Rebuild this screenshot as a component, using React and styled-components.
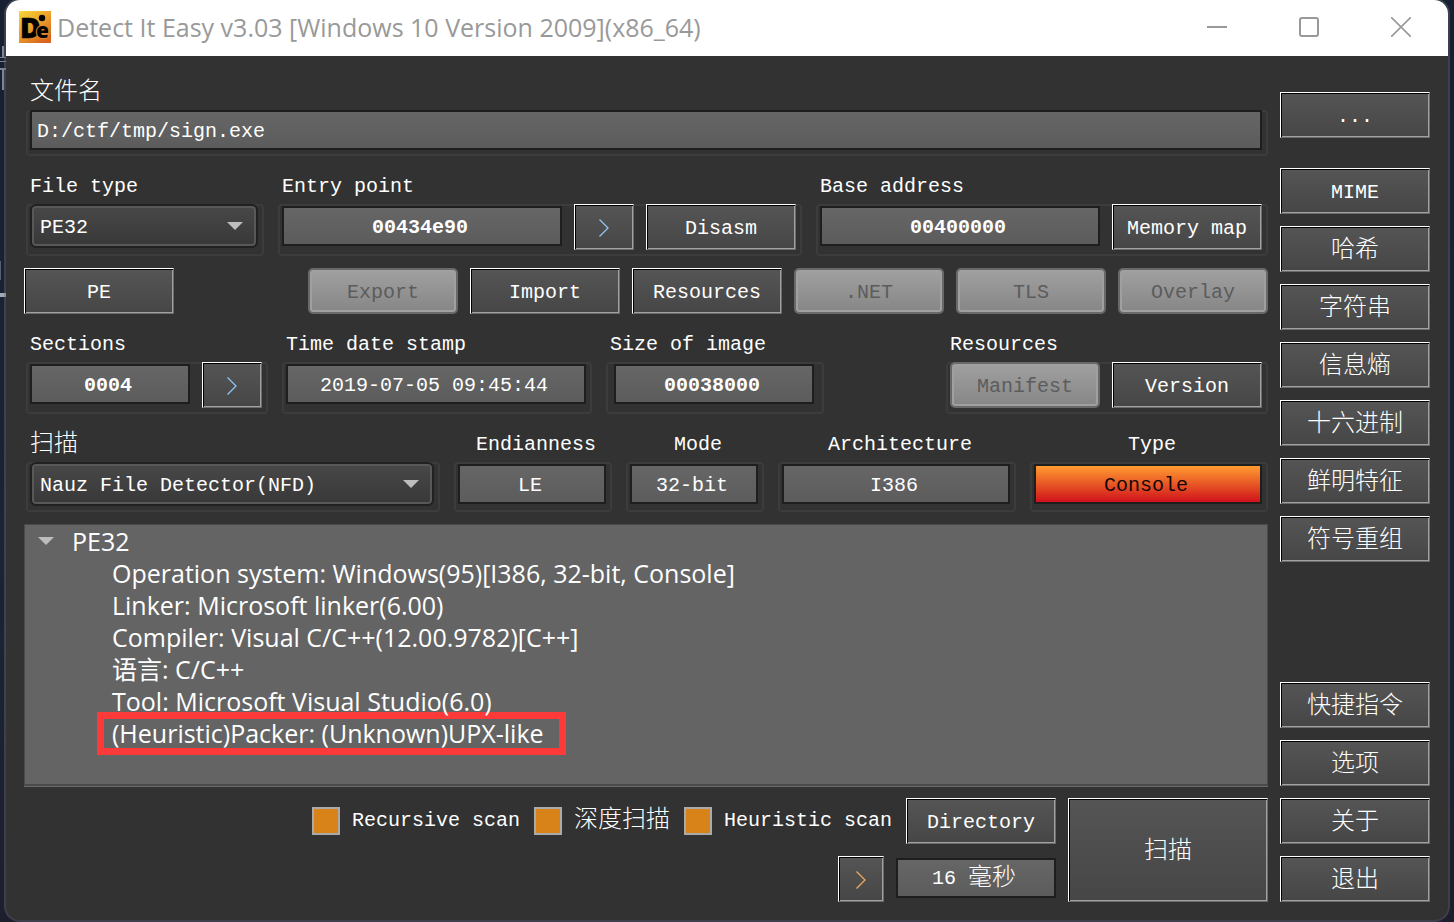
import React from 'react'
import styled, { createGlobalStyle, css } from 'styled-components'

const MONO = "'Liberation Mono', 'Noto Sans CJK SC', monospace"
const UI = "'Open Sans', 'Noto Sans CJK SC', sans-serif"

const SIDE_TOP = ['MIME', '哈希', '字符串', '信息熵', '十六进制', '鲜明特征', '符号重组']
const SIDE_BOTTOM = ['快捷指令', '选项', '关于', '退出']

const DIRECTORIES = [
  { title: 'Export', disabled: true },
  { title: 'Import' },
  { title: 'Resources' },
  { title: '.NET', disabled: true },
  { title: 'TLS', disabled: true },
  { title: 'Overlay', disabled: true },
]

const RESULTS = [
  'Operation system: Windows(95)[I386, 32-bit, Console]',
  'Linker: Microsoft linker(6.00)',
  'Compiler: Visual C/C++(12.00.9782)[C++]',
  '语言: C/C++',
  'Tool: Microsoft Visual Studio(6.0)',
  '(Heuristic)Packer: (Unknown)UPX-like',
]

export default function App() {
  return (
    <>
      <GlobalStyle />
      <Desktop>
        <Window>
          <TitleBar>
            <Logo />
            <Title>Detect It Easy v3.03 [Windows 10 Version 2009](x86_64)</Title>
            <WindowControls />
          </TitleBar>
          <Body>
            <Main>
              <Group>
                <Label htmlFor="file" $cjk>
                  文件名
                </Label>
                <Frame>
                  <Field id="file" defaultValue="D:/ctf/tmp/sign.exe" $align="left" $flush />
                </Frame>
              </Group>

              <Row>
                <Group $width={238}>
                  <Label htmlFor="filetype">File type</Label>
                  <Frame>
                    <Combo id="filetype" value="PE32" />
                  </Frame>
                </Group>
                <Group $grow={524}>
                  <Label htmlFor="entry">Entry point</Label>
                  <Frame>
                    <Field id="entry" defaultValue="00434e90" $bold />
                    <ArrowButton label="Entry point details" width={60} color="#8fc4f4" />
                    <Button>Disasm</Button>
                  </Frame>
                </Group>
                <Group $grow={452}>
                  <Label htmlFor="base">Base address</Label>
                  <Frame>
                    <Field id="base" defaultValue="00400000" $bold />
                    <Button>Memory map</Button>
                  </Frame>
                </Group>
              </Row>

              <ButtonRow>
                <Button>PE</Button>
                <Spacer />
                {DIRECTORIES.map(({ title, disabled }) => (
                  <Button key={title} disabled={disabled}>
                    {title}
                  </Button>
                ))}
              </ButtonRow>

              <Row>
                <Group $width={242}>
                  <Label htmlFor="sections">Sections</Label>
                  <Frame>
                    <Field id="sections" defaultValue="0004" $bold />
                    <ArrowButton label="Section list" width={60} color="#8fc4f4" />
                  </Frame>
                </Group>
                <Group $width={310}>
                  <Label htmlFor="stamp">Time date stamp</Label>
                  <Frame>
                    <Field id="stamp" defaultValue="2019-07-05 09:45:44" />
                  </Frame>
                </Group>
                <Group $width={218}>
                  <Label htmlFor="imagesize">Size of image</Label>
                  <Frame $padded>
                    <Field id="imagesize" defaultValue="00038000" $bold />
                  </Frame>
                </Group>
                <Spacer />
                <Group $width={322}>
                  <Label as="span">Resources</Label>
                  <Frame>
                    <Button disabled>Manifest</Button>
                    <Button>Version</Button>
                  </Frame>
                </Group>
              </Row>

              <Row>
                <Group $grow={1}>
                  <Label htmlFor="engine" $cjk>
                    扫描
                  </Label>
                  <Frame>
                    <Combo id="engine" value="Nauz File Detector(NFD)" />
                  </Frame>
                </Group>
                <Group $width={158}>
                  <Label htmlFor="endian" $center>
                    Endianness
                  </Label>
                  <Frame>
                    <Field id="endian" defaultValue="LE" />
                  </Frame>
                </Group>
                <Group $width={138}>
                  <Label htmlFor="mode" $center>
                    Mode
                  </Label>
                  <Frame>
                    <Field id="mode" defaultValue="32-bit" />
                  </Frame>
                </Group>
                <Group $width={238}>
                  <Label htmlFor="arch" $center>
                    Architecture
                  </Label>
                  <Frame>
                    <Field id="arch" defaultValue="I386" />
                  </Frame>
                </Group>
                <Group $width={238}>
                  <Label htmlFor="type" $center>
                    Type
                  </Label>
                  <Frame>
                    <Field id="type" defaultValue="Console" $hot />
                  </Frame>
                </Group>
              </Row>

              <Tree>
                <TreeRoot>
                  <Triangle />
                  PE32
                </TreeRoot>
                {RESULTS.map((text, i) => (
                  <TreeItem key={text}>
                    {i === RESULTS.length - 1 ? <Marked>{text}</Marked> : text}
                  </TreeItem>
                ))}
              </Tree>

              <Footer>
                <Options>
                  <OptionRow>
                    <Check>
                      <CheckBox defaultChecked />
                      Recursive scan
                    </Check>
                    <Check $cjk>
                      <CheckBox defaultChecked />
                      深度扫描
                    </Check>
                    <Check>
                      <CheckBox defaultChecked />
                      Heuristic scan
                    </Check>
                    <Button>Directory</Button>
                  </OptionRow>
                  <TimeRow>
                    <ArrowButton label="Scan log" width={46} color="#f0a860" />
                    <Elapsed>
                      16 <Cjk>毫秒</Cjk>
                    </Elapsed>
                  </TimeRow>
                </Options>
                <ScanButton $cjk>扫描</ScanButton>
              </Footer>
            </Main>

            <Side>
              <BrowseButton>...</BrowseButton>
              {SIDE_TOP.map((title) => (
                <Button key={title} $cjk={title !== 'MIME'}>
                  {title}
                </Button>
              ))}
              <Spacer />
              {SIDE_BOTTOM.map((title) => (
                <Button key={title} $cjk>
                  {title}
                </Button>
              ))}
            </Side>
          </Body>
        </Window>
      </Desktop>
    </>
  )
}

function Logo() {
  return (
    <LogoSvg width="32" height="32" viewBox="0 0 32 32" aria-hidden="true">
      <defs>
        <linearGradient id="logo" x1="0" y1="0" x2="0.7" y2="1">
          <stop offset="0" stopColor="#f5d936" />
          <stop offset="0.5" stopColor="#eda22b" />
          <stop offset="1" stopColor="#d9651f" />
        </linearGradient>
      </defs>
      <rect width="32" height="32" fill="url(#logo)" />
      <text
        x="1"
        y="27"
        fontFamily="Open Sans"
        fontWeight="800"
        fontSize="28"
        stroke="#000"
        strokeWidth="0.6"
      >
        D
        <tspan x="17" fontSize="21" stroke="#e08a28" strokeWidth="2" paintOrder="stroke">
          e
        </tspan>
      </text>
      <circle cx="23" cy="7" r="3.2" />
    </LogoSvg>
  )
}

function WindowControls() {
  return (
    <Controls>
      <ControlButton aria-label="Minimize">
        <svg width="20" height="20" stroke="#999" strokeWidth="2">
          <path d="M0 10h20" />
        </svg>
      </ControlButton>
      <ControlButton aria-label="Maximize">
        <svg width="20" height="20" fill="none" stroke="#999" strokeWidth="2">
          <rect x="1" y="1" width="18" height="18" rx="2" />
        </svg>
      </ControlButton>
      <ControlButton aria-label="Close">
        <svg width="20" height="20" stroke="#999" strokeWidth="1.6">
          <path d="M0 0l20 20M20 0L0 20" />
        </svg>
      </ControlButton>
    </Controls>
  )
}

function Triangle() {
  return (
    <svg width="16" height="8" viewBox="0 0 16 8" aria-hidden="true">
      <path d="M0 0h16l-8 8z" fill="#bdbdbd" />
    </svg>
  )
}

function Combo({ id, value }) {
  return (
    <ComboBox>
      <Select id={id} defaultValue={value}>
        <option>{value}</option>
      </Select>
      <ComboArrow>
        <Triangle />
      </ComboArrow>
    </ComboBox>
  )
}

function ArrowButton({ label, width, color }) {
  return (
    <Button aria-label={label} $width={width}>
      <svg width="10" height="18" fill="none" stroke={color} strokeWidth="1.3">
        <path d="M0.5 0.5L9 9L0.5 17.5" />
      </svg>
    </Button>
  )
}

const GlobalStyle = createGlobalStyle`
  * {
    box-sizing: border-box;
  }
  body {
    margin: 0;
    background: #1a2130;
  }
  button, input, select {
    font: inherit;
    color: inherit;
  }
`

const Desktop = styled.div`
  min-height: 100vh;
  padding: 0 6px 2px;
  background:
    linear-gradient(#a4a9b5, #a4a9b5) 0 293px / 6px 4px no-repeat,
    linear-gradient(#59606f, #59606f) 0 261px / 1px 19px no-repeat,
    linear-gradient(#7d8493, #7d8493) 2px 46px / 2px 12px no-repeat,
    linear-gradient(#7d8493, #7d8493) 0 57px / 6px 1px no-repeat,
    linear-gradient(#7d8493, #7d8493) 0 61px / 6px 1px no-repeat,
    linear-gradient(#7d8493, #7d8493) 0 68px / 6px 2px no-repeat,
    linear-gradient(#7d8493, #7d8493) 2px 70px / 2px 20px no-repeat,
    linear-gradient(#172033, #1a2436 60%, #1d1f2e);
`

const Window = styled.div`
  display: flex;
  flex-direction: column;
  min-height: calc(100vh - 2px);
  border-radius: 14px;
  overflow: hidden;
  background: #323232;
  box-shadow: 0 0 0 2px rgba(110, 112, 120, 0.4);
`

const TitleBar = styled.header`
  display: flex;
  align-items: center;
  gap: 6px;
  height: 56px;
  padding: 0 1px 2px 13px;
  background: #fff;
  color: #999;
`

const LogoSvg = styled.svg`
  overflow: visible;
`

const Title = styled.h1`
  flex: 1;
  margin: 0;
  font: 400 25px/32px ${UI};
`

const Controls = styled.div`
  display: flex;
`

const ControlButton = styled.button`
  display: flex;
  align-items: center;
  justify-content: center;
  width: 92px;
  height: 54px;
  padding: 0;
  border: 0;
  background: none;
`

const Body = styled.div`
  flex: 1;
  display: flex;
  gap: 12px;
  padding: 18px;
  color: #fff;
  font: 20px/24px ${MONO};
`

const Main = styled.main`
  flex: 1;
  min-width: 0;
  display: flex;
  flex-direction: column;
  gap: 12px;
`

const Side = styled.aside`
  display: flex;
  flex-direction: column;
  gap: 12px;
  padding-top: 18px;
`

const Row = styled.div`
  display: flex;
  gap: 14px;
`

const ButtonRow = styled.div`
  display: flex;
  gap: 12px;
`

const Spacer = styled.div`
  flex: 1;
`

const Group = styled.div`
  display: flex;
  flex-direction: column;
  min-width: 0;
  ${(props) => props.$width && `flex: 0 0 ${props.$width}px;`}
  ${(props) => props.$grow && `flex: ${props.$grow} 1 0;`}

  ${Row} > &:first-child, ${Main} > & {
    margin-left: 2px;
  }
`

// SimSun-like thin strokes for the larger Chinese labels
const textSize = css`
  font-size: ${(props) => (props.$cjk ? 24 : 20)}px;
  font-weight: ${(props) => (props.$cjk ? 300 : 400)};
`

const Label = styled.label`
  ${textSize}
  height: 36px;
  padding-top: 2px;
  padding-left: ${(props) => (props.$center ? 6 : 4)}px;
  line-height: 34px;
  text-align: ${(props) => (props.$center ? 'center' : 'left')};
`

const Frame = styled.div`
  flex: 1;
  display: flex;
  align-items: flex-start;
  gap: 12px;
  padding: ${(props) => (props.$padded ? '0 10px 6px 8px' : '0 6px 6px 4px')};
  border-radius: 4px;
  box-shadow: inset 0 0 0 2px #3c3c3c;
`

const fieldBox = css`
  height: 40px;
  border: 2px solid #1e1e1e;
  background: linear-gradient(#666, #5c5c5c);
`

const Field = styled.input`
  ${fieldBox}
  flex: 1;
  min-width: 0;
  margin-top: ${(props) => (props.$flush ? 0 : 2)}px;
  padding: 2px 9px 0 5px;
  border-radius: 0;
  outline: none;
  text-align: ${(props) => props.$align || 'center'};
  font-weight: ${(props) => (props.$bold ? 700 : 400)};
  ${(props) =>
    props.$hot &&
    css`
      background: linear-gradient(#ff9c30, #d0121b);
      color: #140505;
    `}
`

const Elapsed = styled.output`
  ${fieldBox}
  display: flex;
  align-items: center;
  justify-content: center;
  gap: 12px;
  width: 160px;
  margin-top: 2px;
  padding: 2px 4px 0 0;
`

const Cjk = styled.span`
  font-size: 24px;
  font-weight: 300;
`

const Button = styled.button`
  ${textSize}
  display: flex;
  align-items: center;
  justify-content: center;
  flex: none;
  width: ${(props) => props.$width || 150}px;
  height: 46px;
  padding: ${(props) => (props.$width ? 2 : 4)}px 0 0;
  border: 1px solid;
  border-color: #fff #6b6b6b #6b6b6b #fff;
  background: linear-gradient(#555, #464646);
  box-shadow:
    inset 1px 1px #000,
    inset -1px -1px #a2a2a2;

  &:disabled {
    border: 2px solid #696969;
    border-radius: 5px;
    background: linear-gradient(#a0a0a0, #868686);
    box-shadow: inset 0 0 0 2px #a0a0a0;
    color: #5c5c5c;
  }
`

const BrowseButton = styled(Button)`
  margin-bottom: 18px;
`

const ScanButton = styled(Button)`
  width: 200px;
  height: 104px;
`

const ComboBox = styled.div`
  flex: 1;
  display: grid;
  align-items: center;
  height: 44px;
`

const Select = styled.select`
  grid-area: 1 / 1;
  width: 100%;
  height: 44px;
  padding: 3px 8px 0 8px;
  appearance: none;
  border: 2px solid #212121;
  border-radius: 6px;
  outline: none;
  background: linear-gradient(#484848, #383838);
  box-shadow: inset 0 0 0 2px #585858;
`

const ComboArrow = styled.span`
  grid-area: 1 / 1;
  justify-self: end;
  display: flex;
  margin-right: 15px;
  pointer-events: none;
`

const Tree = styled.div`
  flex: 1;
  border: 1px solid #4a4a4a;
  border-bottom: 2px solid #4a4a4a;
  background: #646464;
  box-shadow: 0 1px #6a6a6a;
  font: 25px/32px ${UI};
`

const TreeRoot = styled.div`
  display: flex;
  align-items: center;
  gap: 18px;
  padding-left: 13px;
`

const TreeItem = styled.div`
  padding-left: 87px;
`

const Marked = styled.div`
  width: fit-content;
  margin: -5px 0 -6px -15px;
  padding: 0 15px 0 8px;
  border: 7px solid #fc3a3a;
  line-height: 29px;
`

const Footer = styled.div`
  display: flex;
  gap: 12px;
`

const Options = styled.div`
  flex: 1;
  display: flex;
  flex-direction: column;
  gap: 12px;
`

const OptionRow = styled.div`
  display: flex;
  justify-content: flex-end;
  align-items: center;
  gap: 14px;
`

const TimeRow = styled.div`
  display: flex;
  justify-content: flex-end;
  align-items: flex-start;
  gap: 12px;
`

const Check = styled.label`
  ${textSize}
  display: flex;
  align-items: center;
  gap: 12px;
`

const CheckBox = styled.input.attrs({ type: 'checkbox' })`
  appearance: none;
  width: 28px;
  height: 28px;
  margin: 0;
  border: 2px solid #aaa;
  background: #2a2a2a;

  &:checked {
    background: #d8821a;
  }
`
